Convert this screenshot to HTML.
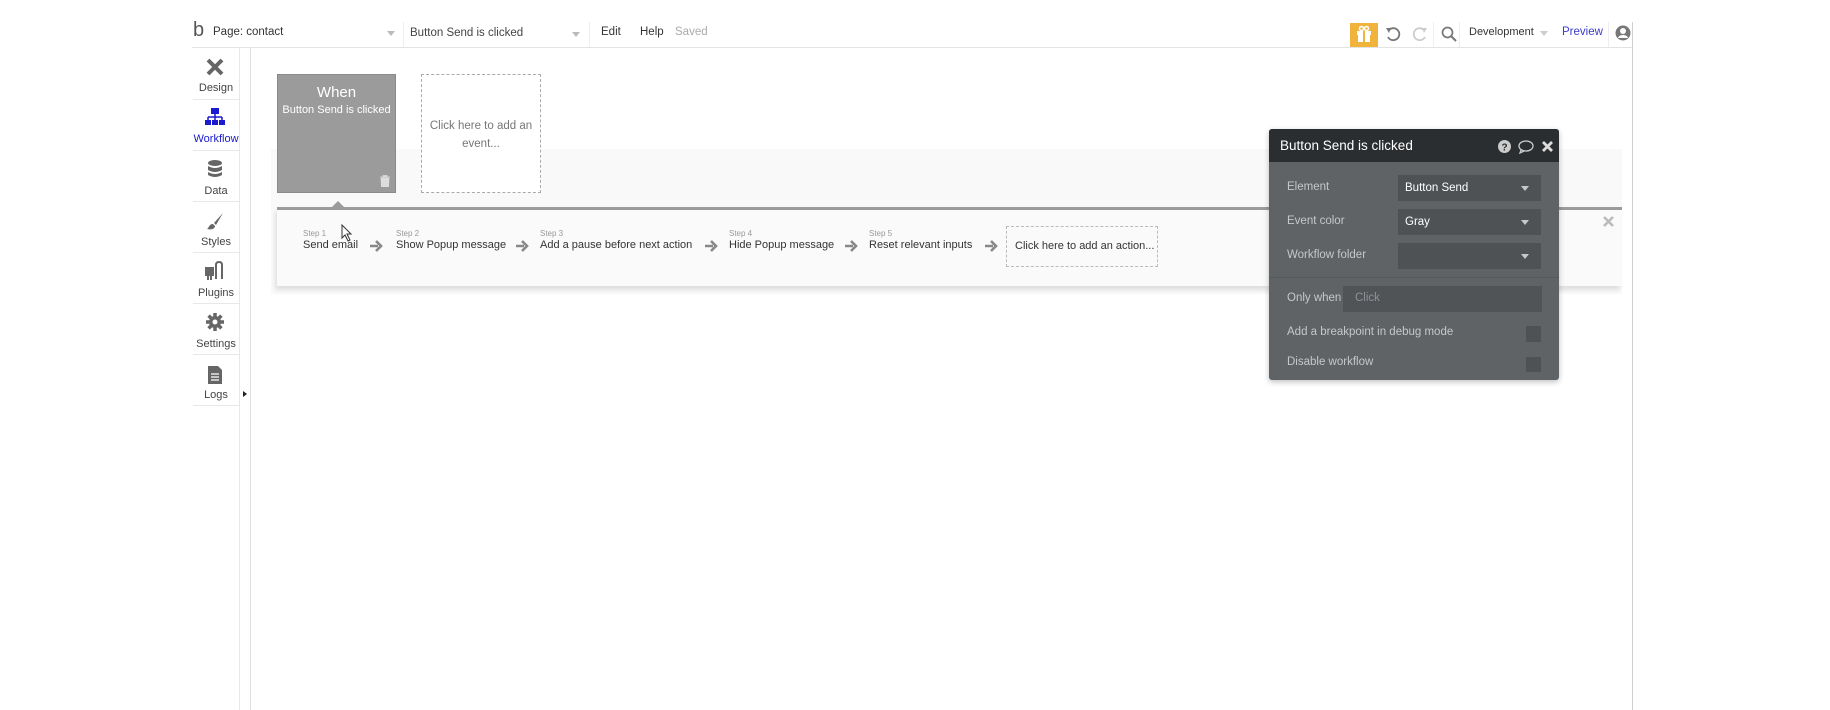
<!DOCTYPE html>
<html><head><meta charset="utf-8"><style>
*{box-sizing:border-box;margin:0;padding:0}
body{width:1830px;height:710px;background:#fff;position:relative;overflow:hidden;font-family:"Liberation Sans",sans-serif;color:#333;font-size:12px}
.a{position:absolute;white-space:nowrap}
.sb{position:absolute;left:193px;width:46px;text-align:center;font-size:11px;color:#444}
.div{position:absolute;left:193px;width:46px;height:1px;background:#e8e8e8}
.lbl{font-size:8px;color:#999}
.nm{font-size:11px;color:#333;margin-top:1px}
.arr{position:absolute;top:240px}
.pl{position:absolute;left:1287px;font-size:11.5px;color:#c5c8ca}
.sel{position:absolute;left:1398px;width:143px;height:26px;background:#4f5255;color:#fff;font-size:11.5px;padding:7px 0 0 7px}
.sel:after{content:"";position:absolute;right:12px;top:11px;border:4px solid transparent;border-top:5px solid #c8c8c8}
</style></head><body>
<!-- top bar -->
<div class="a" style="left:192px;top:47px;width:1441px;height:1px;background:#e3e3e3"></div>
<div class="a" style="left:1632px;top:22px;width:1px;height:688px;background:#cfcfcf"></div>
<div class="a" style="left:193px;top:19px;font-size:20px;color:#555">b</div>
<div class="a" style="left:213px;top:26px;font-size:11.5px;color:#333">Page: contact</div>
<div class="a" style="left:387px;top:31px;border:4px solid transparent;border-top:5px solid #bbb"></div>
<div class="a" style="left:403px;top:22px;width:1px;height:25px;background:#eee"></div>
<div class="a" style="left:410px;top:27px;font-size:11.5px;color:#444">Button Send is clicked</div>
<div class="a" style="left:572px;top:32px;border:4px solid transparent;border-top:5px solid #bbb"></div>
<div class="a" style="left:589px;top:22px;width:1px;height:25px;background:#eee"></div>
<div class="a" style="left:601px;top:26px;font-size:11.5px;color:#333">Edit</div>
<div class="a" style="left:640px;top:26px;font-size:11.5px;color:#333">Help</div>
<div class="a" style="left:675px;top:26px;font-size:11.5px;color:#aaa">Saved</div>
<div class="a" style="left:1350px;top:23px;width:28px;height:24px;background:#f0b43c"></div>
<svg class="a" style="left:1355px;top:25px" width="18" height="18" viewBox="0 0 18 18"><rect x="2" y="6" width="14" height="4" fill="#fff"/><rect x="3" y="10" width="12" height="7" fill="#fff"/><rect x="8" y="6" width="2" height="11" fill="#f0b43c"/><circle cx="6.5" cy="3.5" r="2" fill="none" stroke="#fff" stroke-width="1.5"/><circle cx="11.5" cy="3.5" r="2" fill="none" stroke="#fff" stroke-width="1.5"/></svg>
<svg class="a" style="left:1384px;top:25px" width="18" height="18" viewBox="0 0 18 18"><path d="M5 5A6 6 0 1 1 4 12" fill="none" stroke="#777" stroke-width="1.8"/><path d="M2 3L7 3L5 8Z" fill="#777"/></svg>
<svg class="a" style="left:1411px;top:25px" width="18" height="18" viewBox="0 0 18 18"><path d="M13 5A6 6 0 1 0 14 12" fill="none" stroke="#ccc" stroke-width="1.8"/><path d="M16 3L11 3L13 8Z" fill="#ccc"/></svg>
<div class="a" style="left:1433px;top:22px;width:1px;height:25px;background:#eee"></div>
<svg class="a" style="left:1440px;top:25px" width="18" height="18" viewBox="0 0 18 18"><circle cx="7.5" cy="7.5" r="5" fill="none" stroke="#777" stroke-width="1.7"/><path d="M11 11L16 16" stroke="#777" stroke-width="2"/></svg>
<div class="a" style="left:1459px;top:22px;width:1px;height:25px;background:#eee"></div>
<div class="a" style="left:1469px;top:26px;font-size:11px;color:#333">Development</div>
<div class="a" style="left:1540px;top:31px;border:4px solid transparent;border-top:5px solid #ccc"></div>
<div class="a" style="left:1562px;top:26px;font-size:11.5px;color:#3b3bcc">Preview</div>
<div class="a" style="left:1608px;top:22px;width:1px;height:25px;background:#eee"></div>
<svg class="a" style="left:1615px;top:25px" width="16" height="16" viewBox="0 0 16 16"><circle cx="8" cy="8" r="7.5" fill="#777"/><circle cx="8" cy="6" r="3" fill="#fff"/><path d="M3 13C4 9 12 9 13 13Z" fill="#fff"/></svg>
<!-- sidebar -->
<div class="a" style="left:239px;top:48px;width:1px;height:662px;background:#e8e8e8"></div>
<div class="a" style="left:250px;top:48px;width:1px;height:662px;background:#e0e0e0"></div>
<svg class="a" style="left:205px;top:57px" width="20" height="20" viewBox="0 0 20 20"><path d="M3 3L17 17M17 3L3 17" stroke="#666" stroke-width="4"/></svg>
<div class="sb" style="top:82px">Design</div><div class="div" style="top:99px"></div>
<svg class="a" style="left:204px;top:107px" width="22" height="20" viewBox="0 0 22 20"><rect x="7" y="1" width="8" height="6" fill="#1a1ad0"/><path d="M11 7V10M4 10H18M4 10V13M11 10V13M18 10V13" stroke="#1a1ad0" stroke-width="1.5" fill="none"/><rect x="1" y="13" width="6" height="5" fill="#1a1ad0"/><rect x="8" y="13" width="6" height="5" fill="#1a1ad0"/><rect x="15" y="13" width="6" height="5" fill="#1a1ad0"/></svg>
<div class="sb" style="top:133px;color:#1a1ad0">Workflow</div><div class="div" style="top:150px"></div>
<svg class="a" style="left:207px;top:159px" width="16" height="20" viewBox="0 0 16 20"><ellipse cx="8" cy="4" rx="7" ry="3" fill="#666"/><path d="M1 7Q8 11 15 7V11Q8 15 1 11Z" fill="#666"/><path d="M1 13Q8 17 15 13V16Q8 20 1 16Z" fill="#666"/></svg>
<div class="sb" style="top:185px">Data</div><div class="div" style="top:201px"></div>
<svg class="a" style="left:205px;top:211px" width="20" height="20" viewBox="0 0 20 20"><path d="M18 2L9 12L11 14Z" fill="#666"/><path d="M8 13C4 13 4 17 2 18C6 19 10 18 10 15Z" fill="#666"/></svg>
<div class="sb" style="top:236px">Styles</div><div class="div" style="top:252px"></div>
<svg class="a" style="left:204px;top:261px" width="22" height="20" viewBox="0 0 22 20"><rect x="1" y="6" width="9" height="9" fill="#666"/><rect x="3" y="15" width="2" height="4" fill="#666"/><rect x="6" y="15" width="2" height="4" fill="#666"/><path d="M12 18V4Q12 1 15 1Q18 1 18 4V18" stroke="#666" stroke-width="2" fill="none"/></svg>
<div class="sb" style="top:287px">Plugins</div><div class="div" style="top:303px"></div>
<svg class="a" style="left:205px;top:312px" width="20" height="20" viewBox="0 0 20 20"><circle cx="10" cy="10" r="6" fill="#666"/><path d="M10 1V19M1 10H19M3.6 3.6L16.4 16.4M16.4 3.6L3.6 16.4" stroke="#666" stroke-width="3.5"/><circle cx="10" cy="10" r="2.5" fill="#fff"/></svg>
<div class="sb" style="top:338px">Settings</div><div class="div" style="top:354px"></div>
<svg class="a" style="left:207px;top:365px" width="16" height="20" viewBox="0 0 16 20"><path d="M1 1H11L15 5V19H1Z" fill="#666"/><path d="M4 9H12M4 12H12M4 15H12" stroke="#fff" stroke-width="1.2"/></svg>
<div class="sb" style="top:389px">Logs</div><div class="div" style="top:405px"></div>
<div class="a" style="left:243px;top:391px;border:3px solid transparent;border-left:4px solid #222"></div>
<!-- canvas -->
<div class="a" style="left:271px;top:149px;width:1351px;height:145px;background:#f9f9f9"></div>
<div class="a" style="left:277px;top:74px;width:119px;height:119px;background:#9b9b9b;border:1px solid #8a8a8a;color:#fff;text-align:center">
<div style="font-size:15px;margin-top:9px">When</div><div style="font-size:11px;margin-top:3px">Button Send is clicked</div></div>
<svg class="a" style="left:380px;top:175px" width="10" height="12" viewBox="0 0 10 12"><path d="M0 2H10M3 2V0.5H7V2M1 3H9L8.5 12H1.5Z" fill="#ddd" stroke="#ddd" stroke-width="0.8"/></svg>
<div class="a" style="left:421px;top:74px;width:120px;height:119px;border:1px dashed #aaa;background:#fff;text-align:center;color:#777;font-size:11.5px;line-height:18px;padding-top:42px">Click here to add an<br>event...</div>
<div class="a" style="left:277px;top:207px;width:1345px;height:79px;background:#fafafa;border-top:3px solid #9b9b9b;box-shadow:-2px 4px 4px rgba(0,0,0,0.1)"></div>
<div class="a" style="left:332px;top:201px;border:6px solid transparent;border-bottom:6px solid #9b9b9b;border-top:0"></div>
<div class="a" style="left:303px;top:229px"><div class="lbl">Step 1</div><div class="nm">Send email</div></div>
<div class="a" style="left:396px;top:229px"><div class="lbl">Step 2</div><div class="nm">Show Popup message</div></div>
<div class="a" style="left:540px;top:229px"><div class="lbl">Step 3</div><div class="nm">Add a pause before next action</div></div>
<div class="a" style="left:729px;top:229px"><div class="lbl">Step 4</div><div class="nm">Hide Popup message</div></div>
<div class="a" style="left:869px;top:229px"><div class="lbl">Step 5</div><div class="nm">Reset relevant inputs</div></div>
<svg class="arr" style="left:370px" width="13" height="12" viewBox="0 0 13 12"><path d="M0 6H8M6 1L11 6L6 11" stroke="#888" stroke-width="2.6" fill="none"/></svg>
<svg class="arr" style="left:516px" width="13" height="12" viewBox="0 0 13 12"><path d="M0 6H8M6 1L11 6L6 11" stroke="#888" stroke-width="2.6" fill="none"/></svg>
<svg class="arr" style="left:705px" width="13" height="12" viewBox="0 0 13 12"><path d="M0 6H8M6 1L11 6L6 11" stroke="#888" stroke-width="2.6" fill="none"/></svg>
<svg class="arr" style="left:845px" width="13" height="12" viewBox="0 0 13 12"><path d="M0 6H8M6 1L11 6L6 11" stroke="#888" stroke-width="2.6" fill="none"/></svg>
<svg class="arr" style="left:985px" width="13" height="12" viewBox="0 0 13 12"><path d="M0 6H8M6 1L11 6L6 11" stroke="#888" stroke-width="2.6" fill="none"/></svg>
<div class="a" style="left:1006px;top:226px;width:152px;height:41px;border:1px dashed #bbb;font-size:11px;color:#333;padding:13px 0 0 8px">Click here to add an action...</div>
<svg class="a" style="left:1603px;top:216px" width="11" height="11" viewBox="0 0 11 11"><path d="M1 1L10 10M10 1L1 10" stroke="#bbb" stroke-width="2.6"/></svg>
<!-- popup -->
<div class="a" style="left:1269px;top:129px;width:290px;height:251px;background:#5f6366;border-radius:3px;box-shadow:0 2px 6px rgba(0,0,0,0.25);overflow:hidden">
<div style="height:33px;background:#2b2e30;color:#fff;font-size:13.5px;padding:9px 0 0 11px">Button Send is clicked</div></div>
<svg class="a" style="left:1498px;top:140px" width="13" height="13" viewBox="0 0 13 13"><circle cx="6.5" cy="6.5" r="6.5" fill="#ccc"/><text x="6.5" y="10.5" font-size="10" font-weight="bold" text-anchor="middle" fill="#2b2e30" font-family="Liberation Sans">?</text></svg>
<svg class="a" style="left:1518px;top:140px" width="16" height="14" viewBox="0 0 16 14"><ellipse cx="8" cy="6" rx="7" ry="5" fill="none" stroke="#ccc" stroke-width="1.3"/><path d="M3 10L2 13L6 11" fill="none" stroke="#ccc" stroke-width="1.3"/></svg>
<svg class="a" style="left:1542px;top:141px" width="11" height="11" viewBox="0 0 11 11"><path d="M1 1L10 10M10 1L1 10" stroke="#ddd" stroke-width="2.8"/></svg>
<div class="pl" style="top:181px">Element</div>
<div class="sel" style="top:175px">Button Send</div>
<div class="pl" style="top:215px">Event color</div>
<div class="sel" style="top:209px">Gray</div>
<div class="pl" style="top:249px">Workflow folder</div>
<div class="sel" style="top:243px"></div>
<div class="a" style="left:1269px;top:277px;width:290px;height:1px;background:#555a5d"></div>
<div class="pl" style="top:292px">Only when</div>
<div class="a" style="left:1343px;top:286px;width:199px;height:26px;background:#505457"></div>
<div class="a" style="left:1355px;top:292px;font-size:11.5px;color:#8e9295">Click</div>
<div class="pl" style="top:326px">Add a breakpoint in debug mode</div>
<div class="a" style="left:1526px;top:326px;width:15px;height:16px;background:#4f5255"></div>
<div class="pl" style="top:356px">Disable workflow</div>
<div class="a" style="left:1526px;top:357px;width:15px;height:15px;background:#4f5255"></div>
<!-- cursor -->
<svg class="a" style="left:341px;top:224px" width="12" height="18" viewBox="0 0 12 18"><path d="M1 1V14L4 11L7 17L9 16L6 10H10Z" fill="#fff" stroke="#333" stroke-width="1"/></svg>
</body></html>
